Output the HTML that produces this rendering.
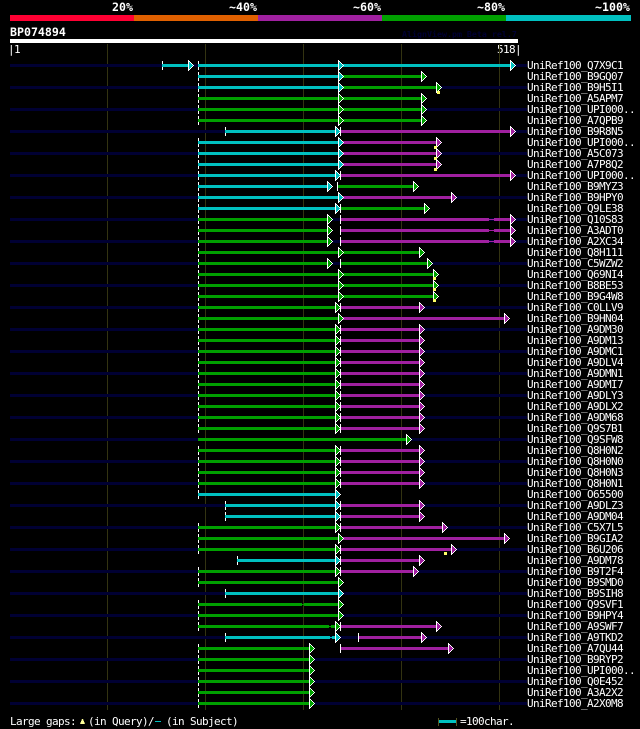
<!DOCTYPE html>
<html><head><meta charset="utf-8"><style>
html,body{margin:0;padding:0;background:#000;width:640px;height:729px;overflow:hidden}
svg{display:block;shape-rendering:crispEdges}
text{font-family:"DejaVu Sans Mono","Liberation Mono",monospace;font-size:11px;letter-spacing:-.62px;fill:#fff;white-space:pre}
.h{font-size:11.6px;font-weight:bold;letter-spacing:0}
.n{stroke:#000033;stroke-width:3}
path{fill:none;shape-rendering:geometricPrecision}
.c{stroke:#00c0c0;color:#00c0c0;stroke-width:3}
.g{stroke:#00a000;color:#00a000;stroke-width:3}
.p{stroke:#a020a0;color:#a020a0;stroke-width:3}
.t{stroke:#fff;stroke-width:1}
</style></head><body>
<svg width="640" height="729" viewBox="0 0 640 729" xmlns="http://www.w3.org/2000/svg">
<defs><g id="a" stroke="none"><g fill="#fff"><rect x="0" y="-5" width="1" height="11"/><rect x="1" y="-4" width="1" height="9"/><rect x="2" y="-3" width="1" height="7"/><rect x="3" y="-2" width="1" height="5"/><rect x="4" y="-1" width="1" height="3"/><rect x="5" y="0" width="1" height="1"/></g><g fill="currentColor"><rect x="1" y="-3" width="1" height="7"/><rect x="2" y="-2" width="1" height="5"/><rect x="3" y="-1" width="1" height="3"/><rect x="4" y="0" width="1" height="1"/></g></g></defs>
<rect x="10" y="15" width="124" height="6" fill="#ff0033"/><rect x="134" y="15" width="124" height="6" fill="#e06000"/><rect x="258" y="15" width="124" height="6" fill="#a020a0"/><rect x="382" y="15" width="124" height="6" fill="#00a000"/><rect x="506" y="15" width="125" height="6" fill="#00c0c0"/>
<text class="h" x="112" y="11">20%</text><text class="h" x="229" y="11">~40%</text><text class="h" x="353" y="11">~60%</text><text class="h" x="477" y="11">~80%</text><text class="h" x="595" y="11">~100%</text>
<text class="h" x="10" y="36">BP074894</text>
<text x="402" y="37" style="font-size:8.3px;font-weight:bold;letter-spacing:0;fill:#000033">AlignView.pm Beta rel.7</text>
<rect x="10" y="39" width="508" height="4" fill="#fff"/>
<text x="8" y="53">|1</text><text x="497" y="53">518|</text>
<path d="M107.5 44V710M205.5 44V710M303.5 44V710M401.5 44V710M499.5 44V710" stroke="#333311" stroke-width="1"/>

<g transform="translate(0,65)"><path class="n" d="M10 .5H527"/><path class="t" d="M162.5 -4v9M198.5 -4v9"/><path class="c" d="M162 .5H190M198 .5H512"/><use href="#a" x="188" class="c"/><use href="#a" x="338" class="c"/><use href="#a" x="510" class="c"/><text x="527" y="4">UniRef100_Q7X9C1</text></g>
<g transform="translate(0,76)"><path class="t" d="M198.5 -4v9"/><path class="c" d="M198 .5H340"/><path class="g" d="M340 .5H423"/><use href="#a" x="338" class="c"/><use href="#a" x="421" class="g"/><text x="527" y="4">UniRef100_B9GQ07</text></g>
<g transform="translate(0,87)"><path class="n" d="M10 .5H527"/><path class="t" d="M198.5 -4v9"/><path class="c" d="M198 .5H340"/><path class="g" d="M340 .5H438"/><use href="#a" x="338" class="c"/><use href="#a" x="436" class="g"/><rect x="437" y="4" width="3" height="3" fill="#ffff66"/><text x="527" y="4">UniRef100_B9H5I1</text></g>
<g transform="translate(0,98)"><path class="t" d="M198.5 -4v9"/><path class="g" d="M198 .5H423"/><use href="#a" x="338" class="g"/><use href="#a" x="421" class="g"/><text x="527" y="4">UniRef100_A5APM7</text></g>
<g transform="translate(0,109)"><path class="n" d="M10 .5H527"/><path class="t" d="M198.5 -4v9"/><path class="g" d="M198 .5H423"/><use href="#a" x="338" class="g"/><use href="#a" x="421" class="g"/><text x="527" y="4">UniRef100_UPI000..</text></g>
<g transform="translate(0,120)"><path class="t" d="M198.5 -4v9"/><path class="g" d="M198 .5H423"/><use href="#a" x="338" class="g"/><use href="#a" x="421" class="g"/><text x="527" y="4">UniRef100_A7QPB9</text></g>
<g transform="translate(0,131)"><path class="n" d="M10 .5H527"/><path class="t" d="M225.5 -4v9M340.5 -4v9"/><path class="c" d="M225 .5H337"/><path class="p" d="M341 .5H512"/><use href="#a" x="335" class="c"/><use href="#a" x="510" class="p"/><text x="527" y="4">UniRef100_B9R8N5</text></g>
<g transform="translate(0,142)"><path class="t" d="M198.5 -4v9"/><path class="c" d="M198 .5H340"/><path class="p" d="M340 .5H438"/><use href="#a" x="338" class="c"/><use href="#a" x="436" class="p"/><rect x="434" y="4" width="3" height="3" fill="#ffff66"/><text x="527" y="4">UniRef100_UPI000..</text></g>
<g transform="translate(0,153)"><path class="n" d="M10 .5H527"/><path class="t" d="M198.5 -4v9"/><path class="c" d="M198 .5H340"/><path class="p" d="M340 .5H438"/><use href="#a" x="338" class="c"/><use href="#a" x="436" class="p"/><rect x="434" y="4" width="3" height="3" fill="#ffff66"/><text x="527" y="4">UniRef100_A5C073</text></g>
<g transform="translate(0,164)"><path class="t" d="M198.5 -4v9"/><path class="c" d="M198 .5H340"/><path class="p" d="M340 .5H438"/><use href="#a" x="338" class="c"/><use href="#a" x="436" class="p"/><rect x="434" y="4" width="3" height="3" fill="#ffff66"/><text x="527" y="4">UniRef100_A7P8Q2</text></g>
<g transform="translate(0,175)"><path class="n" d="M10 .5H527"/><path class="t" d="M198.5 -4v9M340.5 -4v9"/><path class="c" d="M198 .5H337"/><path class="p" d="M341 .5H512"/><use href="#a" x="335" class="c"/><use href="#a" x="510" class="p"/><text x="527" y="4">UniRef100_UPI000..</text></g>
<g transform="translate(0,186)"><path class="t" d="M198.5 -4v9M337.5 -4v9"/><path class="c" d="M198 .5H329"/><path class="g" d="M338 .5H415"/><use href="#a" x="327" class="c"/><use href="#a" x="413" class="g"/><text x="527" y="4">UniRef100_B9MYZ3</text></g>
<g transform="translate(0,197)"><path class="n" d="M10 .5H527"/><path class="t" d="M198.5 -4v9"/><path class="c" d="M198 .5H340"/><path class="p" d="M340 .5H453"/><use href="#a" x="338" class="c"/><use href="#a" x="451" class="p"/><text x="527" y="4">UniRef100_B9HPY0</text></g>
<g transform="translate(0,208)"><path class="t" d="M198.5 -4v9M340.5 -4v9"/><path class="c" d="M198 .5H337"/><path class="g" d="M341 .5H426"/><use href="#a" x="335" class="c"/><use href="#a" x="424" class="g"/><text x="527" y="4">UniRef100_Q9LE38</text></g>
<g transform="translate(0,219)"><path class="n" d="M10 .5H527"/><path class="t" d="M198.5 -4v9M340.5 -4v9"/><path class="g" d="M198 .5H329"/><path class="p" d="M341 .5H489M494 .5H512"/><rect x="489" y="0" width="5" height="1" fill="#a020a0"/><use href="#a" x="327" class="g"/><use href="#a" x="510" class="p"/><text x="527" y="4">UniRef100_Q10S83</text></g>
<g transform="translate(0,230)"><path class="t" d="M198.5 -4v9M340.5 -4v9"/><path class="g" d="M198 .5H329"/><path class="p" d="M341 .5H489M494 .5H512"/><rect x="489" y="0" width="5" height="1" fill="#a020a0"/><use href="#a" x="327" class="g"/><use href="#a" x="510" class="p"/><text x="527" y="4">UniRef100_A3ADT0</text></g>
<g transform="translate(0,241)"><path class="n" d="M10 .5H527"/><path class="t" d="M198.5 -4v9M340.5 -4v9"/><path class="g" d="M198 .5H329"/><path class="p" d="M341 .5H489M494 .5H512"/><rect x="489" y="0" width="5" height="1" fill="#a020a0"/><use href="#a" x="327" class="g"/><use href="#a" x="510" class="p"/><text x="527" y="4">UniRef100_A2XC34</text></g>
<g transform="translate(0,252)"><path class="t" d="M198.5 -4v9"/><path class="g" d="M198 .5H421"/><use href="#a" x="338" class="g"/><use href="#a" x="419" class="g"/><text x="527" y="4">UniRef100_Q8H111</text></g>
<g transform="translate(0,263)"><path class="n" d="M10 .5H527"/><path class="t" d="M198.5 -4v9M340.5 -4v9"/><path class="g" d="M198 .5H329M341 .5H429"/><use href="#a" x="327" class="g"/><use href="#a" x="427" class="g"/><text x="527" y="4">UniRef100_C5WZW2</text></g>
<g transform="translate(0,274)"><path class="t" d="M198.5 -4v9"/><path class="g" d="M198 .5H435"/><use href="#a" x="338" class="g"/><use href="#a" x="433" class="g"/><rect x="433" y="3" width="3" height="3" fill="#ffff66"/><text x="527" y="4">UniRef100_Q69NI4</text></g>
<g transform="translate(0,285)"><path class="n" d="M10 .5H527"/><path class="t" d="M198.5 -4v9"/><path class="g" d="M198 .5H435"/><use href="#a" x="338" class="g"/><use href="#a" x="433" class="g"/><rect x="433" y="3" width="3" height="3" fill="#ffff66"/><text x="527" y="4">UniRef100_B8BE53</text></g>
<g transform="translate(0,296)"><path class="t" d="M198.5 -4v9"/><path class="g" d="M198 .5H435"/><use href="#a" x="338" class="g"/><use href="#a" x="433" class="g"/><rect x="433" y="3" width="3" height="3" fill="#ffff66"/><text x="527" y="4">UniRef100_B9G4W8</text></g>
<g transform="translate(0,307)"><path class="n" d="M10 .5H527"/><path class="t" d="M198.5 -4v9M340.5 -4v9"/><path class="g" d="M198 .5H337"/><path class="p" d="M341 .5H421"/><use href="#a" x="335" class="g"/><use href="#a" x="419" class="p"/><text x="527" y="4">UniRef100_C0LLV9</text></g>
<g transform="translate(0,318)"><path class="t" d="M198.5 -4v9"/><path class="g" d="M198 .5H340"/><path class="p" d="M340 .5H506"/><use href="#a" x="338" class="g"/><use href="#a" x="504" class="p"/><text x="527" y="4">UniRef100_B9HN04</text></g>
<g transform="translate(0,329)"><path class="n" d="M10 .5H527"/><path class="t" d="M198.5 -4v9M340.5 -4v9"/><path class="g" d="M198 .5H337"/><path class="p" d="M341 .5H421"/><use href="#a" x="335" class="g"/><use href="#a" x="419" class="p"/><text x="527" y="4">UniRef100_A9DM30</text></g>
<g transform="translate(0,340)"><path class="t" d="M198.5 -4v9M340.5 -4v9"/><path class="g" d="M198 .5H337"/><path class="p" d="M341 .5H421"/><use href="#a" x="335" class="g"/><use href="#a" x="419" class="p"/><text x="527" y="4">UniRef100_A9DM13</text></g>
<g transform="translate(0,351)"><path class="n" d="M10 .5H527"/><path class="t" d="M198.5 -4v9M340.5 -4v9"/><path class="g" d="M198 .5H337"/><path class="p" d="M341 .5H421"/><use href="#a" x="335" class="g"/><use href="#a" x="419" class="p"/><text x="527" y="4">UniRef100_A9DMC1</text></g>
<g transform="translate(0,362)"><path class="t" d="M198.5 -4v9M340.5 -4v9"/><path class="g" d="M198 .5H337"/><path class="p" d="M341 .5H421"/><use href="#a" x="335" class="g"/><use href="#a" x="419" class="p"/><text x="527" y="4">UniRef100_A9DLV4</text></g>
<g transform="translate(0,373)"><path class="n" d="M10 .5H527"/><path class="t" d="M198.5 -4v9M340.5 -4v9"/><path class="g" d="M198 .5H337"/><path class="p" d="M341 .5H421"/><use href="#a" x="335" class="g"/><use href="#a" x="419" class="p"/><text x="527" y="4">UniRef100_A9DMN1</text></g>
<g transform="translate(0,384)"><path class="t" d="M198.5 -4v9M340.5 -4v9"/><path class="g" d="M198 .5H337"/><path class="p" d="M341 .5H421"/><use href="#a" x="335" class="g"/><use href="#a" x="419" class="p"/><text x="527" y="4">UniRef100_A9DMI7</text></g>
<g transform="translate(0,395)"><path class="n" d="M10 .5H527"/><path class="t" d="M198.5 -4v9M340.5 -4v9"/><path class="g" d="M198 .5H337"/><path class="p" d="M341 .5H421"/><use href="#a" x="335" class="g"/><use href="#a" x="419" class="p"/><text x="527" y="4">UniRef100_A9DLY3</text></g>
<g transform="translate(0,406)"><path class="t" d="M198.5 -4v9M340.5 -4v9"/><path class="g" d="M198 .5H337"/><path class="p" d="M341 .5H421"/><use href="#a" x="335" class="g"/><use href="#a" x="419" class="p"/><text x="527" y="4">UniRef100_A9DLX2</text></g>
<g transform="translate(0,417)"><path class="n" d="M10 .5H527"/><path class="t" d="M198.5 -4v9M340.5 -4v9"/><path class="g" d="M198 .5H337"/><path class="p" d="M341 .5H421"/><use href="#a" x="335" class="g"/><use href="#a" x="419" class="p"/><text x="527" y="4">UniRef100_A9DM68</text></g>
<g transform="translate(0,428)"><path class="t" d="M198.5 -4v9M340.5 -4v9"/><path class="g" d="M198 .5H337"/><path class="p" d="M341 .5H421"/><use href="#a" x="335" class="g"/><use href="#a" x="419" class="p"/><text x="527" y="4">UniRef100_Q9S7B1</text></g>
<g transform="translate(0,439)"><path class="n" d="M10 .5H527"/><path class="g" d="M198 .5H408"/><use href="#a" x="406" class="g"/><text x="527" y="4">UniRef100_Q9SFW8</text></g>
<g transform="translate(0,450)"><path class="t" d="M198.5 -4v9M340.5 -4v9"/><path class="g" d="M198 .5H337"/><path class="p" d="M341 .5H421"/><use href="#a" x="335" class="g"/><use href="#a" x="419" class="p"/><text x="527" y="4">UniRef100_Q8H0N2</text></g>
<g transform="translate(0,461)"><path class="n" d="M10 .5H527"/><path class="t" d="M198.5 -4v9M340.5 -4v9"/><path class="g" d="M198 .5H337"/><path class="p" d="M341 .5H421"/><use href="#a" x="335" class="g"/><use href="#a" x="419" class="p"/><text x="527" y="4">UniRef100_Q8H0N0</text></g>
<g transform="translate(0,472)"><path class="t" d="M198.5 -4v9M340.5 -4v9"/><path class="g" d="M198 .5H337"/><path class="p" d="M341 .5H421"/><use href="#a" x="335" class="g"/><use href="#a" x="419" class="p"/><text x="527" y="4">UniRef100_Q8H0N3</text></g>
<g transform="translate(0,483)"><path class="n" d="M10 .5H527"/><path class="t" d="M198.5 -4v9M340.5 -4v9"/><path class="g" d="M198 .5H337"/><path class="p" d="M341 .5H421"/><use href="#a" x="335" class="g"/><use href="#a" x="419" class="p"/><text x="527" y="4">UniRef100_Q8H0N1</text></g>
<g transform="translate(0,494)"><path class="t" d="M198.5 -4v9"/><path class="c" d="M198 .5H337"/><use href="#a" x="335" class="c"/><text x="527" y="4">UniRef100_O65500</text></g>
<g transform="translate(0,505)"><path class="n" d="M10 .5H527"/><path class="t" d="M225.5 -4v9M340.5 -4v9"/><path class="c" d="M225 .5H337"/><path class="p" d="M341 .5H421"/><use href="#a" x="335" class="c"/><use href="#a" x="419" class="p"/><text x="527" y="4">UniRef100_A9DLZ3</text></g>
<g transform="translate(0,516)"><path class="t" d="M225.5 -4v9M340.5 -4v9"/><path class="c" d="M225 .5H337"/><path class="p" d="M341 .5H421"/><use href="#a" x="335" class="c"/><use href="#a" x="419" class="p"/><text x="527" y="4">UniRef100_A9DM04</text></g>
<g transform="translate(0,527)"><path class="n" d="M10 .5H527"/><path class="t" d="M198.5 -4v9M340.5 -4v9"/><path class="g" d="M198 .5H337"/><path class="p" d="M341 .5H444"/><use href="#a" x="335" class="g"/><use href="#a" x="442" class="p"/><text x="527" y="4">UniRef100_C5X7L5</text></g>
<g transform="translate(0,538)"><path class="t" d="M198.5 -4v9"/><path class="g" d="M198 .5H340"/><path class="p" d="M340 .5H506"/><use href="#a" x="338" class="g"/><use href="#a" x="504" class="p"/><text x="527" y="4">UniRef100_B9GIA2</text></g>
<g transform="translate(0,549)"><path class="n" d="M10 .5H527"/><path class="t" d="M198.5 -4v9M340.5 -4v9"/><path class="g" d="M198 .5H337"/><path class="p" d="M341 .5H453"/><use href="#a" x="335" class="g"/><use href="#a" x="451" class="p"/><rect x="444" y="3" width="3" height="3" fill="#ffff66"/><text x="527" y="4">UniRef100_B6U206</text></g>
<g transform="translate(0,560)"><path class="t" d="M237.5 -4v9M340.5 -4v9"/><path class="c" d="M237 .5H337"/><path class="p" d="M341 .5H421"/><use href="#a" x="335" class="c"/><use href="#a" x="419" class="p"/><text x="527" y="4">UniRef100_A9DM78</text></g>
<g transform="translate(0,571)"><path class="n" d="M10 .5H527"/><path class="t" d="M198.5 -4v9M340.5 -4v9"/><path class="g" d="M198 .5H337"/><path class="p" d="M341 .5H415"/><use href="#a" x="335" class="g"/><use href="#a" x="413" class="p"/><text x="527" y="4">UniRef100_B9T2F4</text></g>
<g transform="translate(0,582)"><path class="t" d="M198.5 -4v9"/><path class="g" d="M198 .5H340"/><use href="#a" x="338" class="g"/><text x="527" y="4">UniRef100_B9SMD0</text></g>
<g transform="translate(0,593)"><path class="n" d="M10 .5H527"/><path class="t" d="M225.5 -4v9"/><path class="c" d="M225 .5H340"/><use href="#a" x="338" class="c"/><text x="527" y="4">UniRef100_B9SIH8</text></g>
<g transform="translate(0,604)"><path class="t" d="M198.5 -4v9"/><path class="g" d="M198 .5H302M304 .5H340"/><rect x="302" y="0" width="2" height="1" fill="#00a000"/><use href="#a" x="338" class="g"/><text x="527" y="4">UniRef100_Q9SVF1</text></g>
<g transform="translate(0,615)"><path class="n" d="M10 .5H527"/><path class="t" d="M198.5 -4v9"/><path class="g" d="M198 .5H340"/><use href="#a" x="338" class="g"/><text x="527" y="4">UniRef100_B9HPY4</text></g>
<g transform="translate(0,626)"><path class="t" d="M198.5 -4v9M340.5 -4v9"/><path class="g" d="M198 .5H329M331 .5H337"/><rect x="329" y="0" width="2" height="1" fill="#00a000"/><path class="p" d="M341 .5H438"/><use href="#a" x="335" class="g"/><use href="#a" x="436" class="p"/><text x="527" y="4">UniRef100_A9SWF7</text></g>
<g transform="translate(0,637)"><path class="n" d="M10 .5H527"/><path class="t" d="M225.5 -4v9M358.5 -4v9"/><path class="c" d="M225 .5H330M332 .5H337"/><rect x="330" y="0" width="2" height="1" fill="#00c0c0"/><path class="p" d="M359 .5H423"/><use href="#a" x="335" class="c"/><use href="#a" x="421" class="p"/><text x="527" y="4">UniRef100_A9TKD2</text></g>
<g transform="translate(0,648)"><path class="t" d="M198.5 -4v9M340.5 -4v9"/><path class="g" d="M198 .5H311"/><path class="p" d="M341 .5H450"/><use href="#a" x="309" class="g"/><use href="#a" x="448" class="p"/><text x="527" y="4">UniRef100_A7QU44</text></g>
<g transform="translate(0,659)"><path class="n" d="M10 .5H527"/><path class="t" d="M198.5 -4v9"/><path class="g" d="M198 .5H311"/><use href="#a" x="309" class="g"/><text x="527" y="4">UniRef100_B9RYP2</text></g>
<g transform="translate(0,670)"><path class="t" d="M198.5 -4v9"/><path class="g" d="M198 .5H311"/><use href="#a" x="309" class="g"/><text x="527" y="4">UniRef100_UPI000..</text></g>
<g transform="translate(0,681)"><path class="n" d="M10 .5H527"/><path class="t" d="M198.5 -4v9"/><path class="g" d="M198 .5H311"/><use href="#a" x="309" class="g"/><text x="527" y="4">UniRef100_Q0E452</text></g>
<g transform="translate(0,692)"><path class="t" d="M198.5 -4v9"/><path class="g" d="M198 .5H311"/><use href="#a" x="309" class="g"/><text x="527" y="4">UniRef100_A3A2X2</text></g>
<g transform="translate(0,703)"><path class="n" d="M10 .5H527"/><path class="t" d="M198.5 -4v9"/><path class="g" d="M198 .5H311"/><use href="#a" x="309" class="g"/><text x="527" y="4">UniRef100_A2X0M8</text></g>

<text x="10" y="725">Large gaps:</text>
<polygon points="80,724 82,719 83,719 85,724" fill="#ffff99"/>
<text x="88" y="725">(in Query)/</text>
<rect x="155" y="721" width="6" height="1" fill="#00c0c0"/>
<text x="166" y="725">(in Subject)</text>
<path d="M438.5 718v8M456.5 718v8" stroke="#555522" stroke-width="1"/>
<rect x="439" y="720" width="17" height="3" fill="#00c0c0"/>
<text x="460" y="725">=100char.</text>
</svg>
</body></html>
